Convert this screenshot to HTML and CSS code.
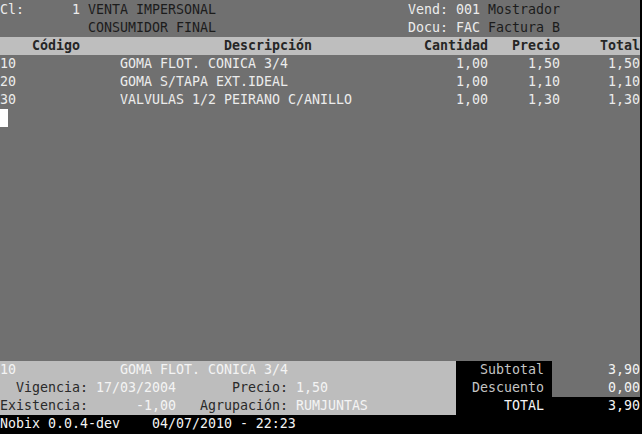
FILE: index.html
```html
<!DOCTYPE html>
<html>
<head>
<meta charset="utf-8">
<link rel="stylesheet" href="styles.css">
<title>Nobix</title>
</head>
<body>
<div class="term">
  <div class="top">
    <div class="row">
      <div class="cust"><span class="lt">Cl:      1</span> <span class="dk">VENTA IMPERSONAL</span></div>
      <div class="doc"><span class="lt">Vend: 001</span> <span class="dk">Mostrador</span></div>
    </div>
    <div class="row">
      <div class="cust"><span class="lt">           </span><span class="dk">CONSUMIDOR FINAL</span></div>
      <div class="doc"><span class="lt">Docu: FAC</span> <span class="dk">Factura B</span></div>
    </div>
  </div>

  <div class="grid head">
    <div class="cell code">Código</div>
    <div class="cell desc">Descripción</div>
    <div class="cell num">Cantidad</div>
    <div class="cell num">Precio</div>
    <div class="cell num">Total</div>
  </div>

  <div class="items">
    <div class="grid item">
      <div class="cell">10</div>
      <div class="cell">GOMA FLOT. CONICA 3/4</div>
      <div class="cell num">1,00</div>
      <div class="cell num">1,50</div>
      <div class="cell num">1,50</div>
    </div>
    <div class="grid item">
      <div class="cell">20</div>
      <div class="cell">GOMA S/TAPA EXT.IDEAL</div>
      <div class="cell num">1,00</div>
      <div class="cell num">1,10</div>
      <div class="cell num">1,10</div>
    </div>
    <div class="grid item">
      <div class="cell">30</div>
      <div class="cell">VALVULAS 1/2 PEIRANO C/ANILLO</div>
      <div class="cell num">1,00</div>
      <div class="cell num">1,30</div>
      <div class="cell num">1,30</div>
    </div>
    <div class="line"><span class="cursor"></span></div>
  </div>

  <div class="footer">
    <div class="info">
      <div class="grid item"><div class="cell wt">10</div><div class="cell wt">GOMA FLOT. CONICA 3/4</div></div>
      <div class="line">  <span class="dk">Vigencia:</span> <span class="wt">17/03/2004</span>       <span class="dk">Precio:</span> <span class="wt">1,50</span></div>
      <div class="line"><span class="dk">Existencia:</span>      <span class="wt">-1,00</span>   <span class="dk">Agrupación:</span> <span class="wt">RUMJUNTAS</span></div>
    </div>
    <div class="labels">
      <div class="line dim">Subtotal</div>
      <div class="line dim">Descuento</div>
      <div class="line bright">TOTAL</div>
    </div>
    <div class="values">
      <div class="line val-gray">3,90</div>
      <div class="line val-gray">0,00</div>
      <div class="line val-black">3,90</div>
    </div>
  </div>

  <div class="status line">Nobix 0.0.4-dev    04/07/2010 - 22:23</div>
</div>
</body>
</html>
```

FILE: styles.css
```css
html, body {
  margin: 0;
  padding: 0;
  background: #000;
}

body {
  width: 642px;
  height: 434px;
  overflow: hidden;
}

.term {
  width: 640px;
  height: 433px;
  padding-top: 1px;
  box-sizing: border-box;
  background: #707070;
  color: #e8e8e8;
  font-family: "DejaVu Sans Mono", monospace;
  font-size: 13.29px;
  display: flex;
  flex-direction: column;
}

.row {
  display: flex;
  height: 18px;
  line-height: 18px;
}

.line {
  height: 18px;
  line-height: 18px;
  white-space: pre;
}

.top .cust {
  width: 408px;
  white-space: pre;
}

.top .doc {
  white-space: pre;
}

.lt { color: #ececec; }
.dk { color: #1c1c1c; }
.wt { color: #f4f4f4; }

.grid {
  display: grid;
  grid-template-columns: 120px 304px 64px 72px 80px;
  height: 18px;
  line-height: 18px;
  white-space: pre;
}

.cell { overflow: hidden; }
.num { text-align: right; }

.head {
  background: #bebebe;
  color: #262626;
  font-weight: bold;
}

.head .code { padding-left: 32px; }
.head .desc { padding-left: 104px; }

.item { color: #ececec; }

.items {
  flex: 1;
}

.cursor {
  display: inline-block;
  vertical-align: top;
  width: 8px;
  height: 18px;
  background: #fff;
}

.footer {
  display: flex;
  height: 54px;
}

.info {
  width: 456px;
  background: #bdbdbd;
}

.info .dk { color: #2a2a2a; }

.info .grid {
  grid-template-columns: 120px 336px;
}

.labels {
  width: 96px;
  background: #000;
  padding-right: 8px;
  box-sizing: border-box;
  text-align: right;
}

.values {
  width: 88px;
  color: #f4f4f4;
  text-align: right;
}

.dim { color: #c4c4c4; }
.bright { color: #f4f4f4; }

.val-gray { background: #707070; }
.val-black { background: #000; }

.status {
  background: #000;
  color: #f4f4f4;
}
```
